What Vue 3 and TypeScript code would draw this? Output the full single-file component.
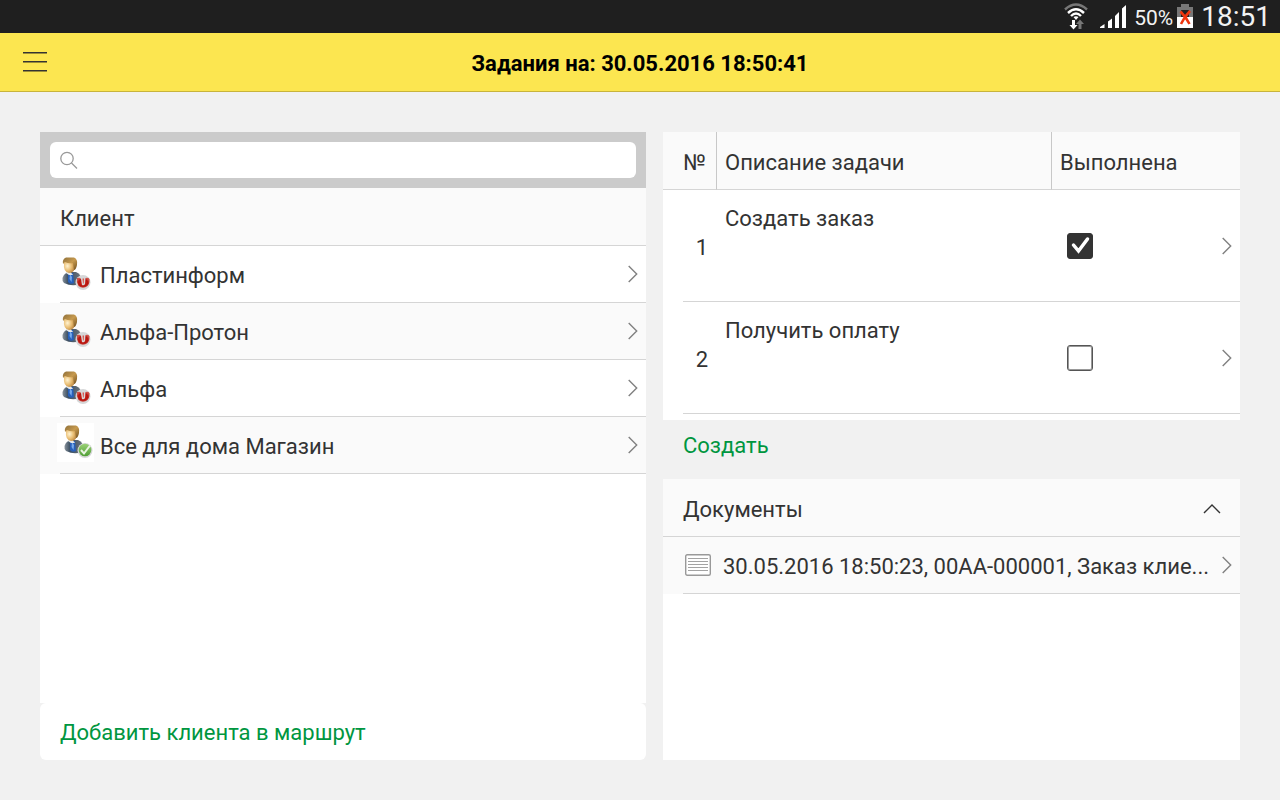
<script setup lang="ts">
import { ref } from 'vue'

interface Client {
  name: string
  done: boolean
}

interface Task {
  id: number
  title: string
  done: boolean
}

const title = 'Задания на: 30.05.2016 18:50:41'
const query = ref('')
const documentsOpen = ref(true)

const clients: Client[] = [
  { name: 'Пластинформ', done: false },
  { name: 'Альфа-Протон', done: false },
  { name: 'Альфа', done: false },
  { name: 'Все для дома Магазин', done: true },
]

const tasks = ref<Task[]>([
  { id: 1, title: 'Создать заказ', done: true },
  { id: 2, title: 'Получить оплату', done: false },
])

const documents: string[] = ['30.05.2016 18:50:23, 00АА-000001, Заказ клие...']
</script>

<template>
  <div class="screen">
    <div class="status">
      <svg class="wifi" width="26" height="28" viewBox="0 0 26 28" fill="none">
        <path d="M2 7.5Q13-2.5 24 7.5" stroke="#777" stroke-width="2.4" />
        <path d="M5 11Q13 3.5 21 11M8 14Q13 9 18 14" stroke="#fff" stroke-width="2.4" />
        <path d="M10.5 15Q13 13.5 15.5 15L13 18z" fill="#fff" />
        <path d="M9 18h3v5h2.500l-4 4.500L6.500 23H9z" fill="#fff" />
        <path d="M15.500 27v-5H13l4-4.500 4 4.500h-2.500v5z" fill="#777" />
      </svg>
      <svg class="signal" width="27" height="23" viewBox="0 0 27 23" fill="#fff">
        <path d="M0 23v-1l4.500-3v4zM8 23v-6.500l4-3v9.500zM15 23v-12l4-4v16zM22 23v-19.500l4-3.500v23z" />
      </svg>
      <span class="percent">50%</span>
      <svg class="battery" width="16" height="24" viewBox="0 0 16 24">
        <path d="M4 0h8v3h4v10H0V3h4z" fill="#777" />
        <path d="M4 6h8v7H4z" fill="#222" />
        <path d="M0 13h16v11H0z" fill="#fff" />
        <path d="M3.500 7.500Q9 13 12.500 20M13 7Q7 13 4 20" stroke="#f0350e" stroke-width="2.500" fill="none" />
      </svg>
      <time class="clock">18:51</time>
    </div>

    <header class="bar">
      <button class="menu" type="button" aria-label="Меню">
        <svg width="24" height="20" viewBox="0 0 24 20">
          <path d="M0 0h24v1H0zM0 9h24v1H0zM0 18h24v1H0z" fill="#333" />
          <path d="M0 1h24v1H0zM0 10h24v1H0zM0 19h24v1H0z" fill="#988b3b" />
        </svg>
      </button>
      <h1>{{ title }}</h1>
    </header>

    <main class="content">
      <section class="clients">
        <div class="search">
          <label class="field">
            <svg width="18" height="18" viewBox="0 0 18 18" fill="none" stroke="#999" stroke-width="1.300">
              <circle cx="7" cy="7.500" r="6.200" />
              <path d="M11.500 12l5.500 5.500" />
            </svg>
            <input v-model="query" type="search" aria-label="Поиск клиента" />
          </label>
        </div>
        <h2 class="heading">Клиент</h2>
        <ul class="list">
          <li v-for="client in clients" :key="client.name">
            <button class="row client" type="button">
              <svg class="person" :class="{ framed: client.done }" width="37" height="39" viewBox="0 0 37 39">
                <defs>
                  <radialGradient id="face" cx=".3" cy=".5" r=".75">
                    <stop offset="0" stop-color="#fff3d2" />
                    <stop offset=".45" stop-color="#e9bd72" />
                    <stop offset="1" stop-color="#a06624" />
                  </radialGradient>
                  <linearGradient id="hair" x1="0" y1="0" x2="1" y2="1">
                    <stop offset="0" stop-color="#8e703b" />
                    <stop offset=".5" stop-color="#c79a4e" />
                    <stop offset="1" stop-color="#72501f" />
                  </linearGradient>
                  <linearGradient id="suit" x1="0" y1="0" x2="1" y2="0">
                    <stop offset="0" stop-color="#8a939b" />
                    <stop offset=".3" stop-color="#3c4f63" />
                    <stop offset="1" stop-color="#6c757d" />
                  </linearGradient>
                  <radialGradient id="redBadge" cx=".5" cy=".5" r=".5">
                    <stop offset="0" stop-color="#d9291d" />
                    <stop offset=".7" stop-color="#b5140e" />
                    <stop offset="1" stop-color="#cf5148" />
                  </radialGradient>
                  <linearGradient id="greenBadge" x1="0" y1="0" x2="0" y2="1">
                    <stop offset="0" stop-color="#9bd276" />
                    <stop offset="1" stop-color="#4f9e35" />
                  </linearGradient>
                </defs>
                <g :transform="client.done ? 'translate(2 -3)' : undefined">
                  <path d="M5.500 26Q7 21 12 20L19 20Q24 22 24 27L23 32Q15 35 7 31Q5 29 5.500 26z" fill="url(#suit)" />
                  <path d="M11 21L16 21L17 31Q13 33 11 30z" fill="#2860ba" />
                  <path d="M13 22L15 25L14.500 30L12.500 27z" fill="#77a9eb" />
                  <path d="M9 21L12 18L16 23L12 23z" fill="#e8e9e8" />
                  <path d="M7 11Q6 20 12 21Q18 21 19 12Q18 7 13 7Q8 7 7 11z" fill="url(#face)" />
                  <path d="M6 12Q5 7 9 5.500L17 5.500Q21 7 20 13Q19 18 17 18L16 11Q12 12 8 10z" fill="url(#hair)" />
                  <circle cx="26" cy="30.500" r="7.500" fill="#d6d7d8" />
                  <template v-if="client.done">
                    <circle cx="26" cy="30" r="6.300" fill="url(#greenBadge)" />
                    <path d="M22 30l3 3.500 6-8" fill="none" stroke="#e9f5e2" stroke-width="2" />
                  </template>
                  <template v-else>
                    <path d="M20 26Q23 25 24 27L25 33Q27 34 28 32L28.500 26Q31 25 32.500 27Q33 33 29 35Q25 37 21.500 34Q19 30 20 26z" fill="url(#redBadge)" />
                    <path d="M25.500 26.500h1.500l-.300 5h-.700z" fill="#d8564e" />
                  </template>
                </g>
              </svg>
              <span class="label">{{ client.name }}</span>
              <svg class="chevron" width="10" height="18" viewBox="0 0 10 18">
                <path d="M.700 1l8 8-8 8" />
              </svg>
            </button>
          </li>
        </ul>
        <button class="action add" type="button">Добавить клиента в маршрут</button>
      </section>

      <div class="details">
        <section class="tasks">
          <table>
            <colgroup>
              <col class="col-number" />
              <col />
              <col class="col-done" />
              <col class="col-open" />
            </colgroup>
            <thead>
              <tr>
                <th class="number" scope="col">№</th>
                <th scope="col">Описание задачи</th>
                <th colspan="2" scope="col">Выполнена</th>
              </tr>
            </thead>
            <tbody>
              <tr v-for="task in tasks" :key="task.id">
                <td class="number">{{ task.id }}</td>
                <td class="description">{{ task.title }}</td>
                <td class="done">
                  <input v-model="task.done" type="checkbox" :aria-label="task.title" />
                </td>
                <td class="open">
                  <button type="button" :aria-label="'Открыть: ' + task.title">
                    <svg class="chevron" width="10" height="18" viewBox="0 0 10 18">
                      <path d="M.700 1l8 8-8 8" />
                    </svg>
                  </button>
                </td>
              </tr>
            </tbody>
          </table>
        </section>
        <button class="action create" type="button">Создать</button>
        <section class="documents">
          <h2 class="heading">
            <button class="toggle" type="button" :aria-expanded="documentsOpen" @click="documentsOpen = !documentsOpen">
              <span>Документы</span>
              <svg width="18" height="10" viewBox="0 0 18 10" fill="none" stroke="#333" stroke-width="1.400">
                <path d="M1 9l8-8 8 8" />
              </svg>
            </button>
          </h2>
          <ul v-if="documentsOpen" class="list">
            <li v-for="item in documents" :key="item">
              <button class="row document" type="button">
                <svg class="sheet" width="26" height="22" viewBox="0 0 26 22" fill="none">
                  <rect x=".700" y=".700" width="24.600" height="20.600" rx="1.500" stroke="#999" stroke-width="1.400" fill="#fff" />
                  <path d="M3 4.500h20M3 7.500h20M3 10.500h20M3 13.500h20M3 16.500h20" stroke="#a3a3a3" />
                </svg>
                <span class="label">{{ item }}</span>
                <svg class="chevron" width="10" height="18" viewBox="0 0 10 18">
                  <path d="M.700 1l8 8-8 8" />
                </svg>
              </button>
            </li>
          </ul>
        </section>
      </div>
    </main>
  </div>
</template>

<style>
body {
  margin: 0;
}
</style>

<style scoped>
* {
  box-sizing: border-box;
}

.screen {
  display: flex;
  flex-direction: column;
  min-height: 100vh;
  background: #f1f1f1;
  color: #333;
  font: 22px/28px Roboto, "Noto Sans", sans-serif;
}

button {
  border: 0;
  padding: 0;
  background: none;
  color: inherit;
  font: inherit;
  text-align: left;
  cursor: pointer;
}

svg {
  display: block;
  flex: none;
}

.status {
  display: flex;
  align-items: center;
  justify-content: flex-end;
  height: 33px;
  padding-right: 9px;
  background: #1f1f1f;
  color: #f2f2f2;
}

.wifi {
  margin-bottom: 2px;
}

.signal {
  margin: 0 7px 0 11px;
}

.percent {
  padding-top: 2px;
  margin-right: 4px;
  font-size: 21px;
}

.battery {
  margin-bottom: 2px;
}

.clock {
  margin-left: 8px;
  font-size: 28px;
}

.bar {
  display: grid;
  grid-template-columns: 1fr auto 1fr;
  align-items: center;
  height: 59px;
  padding: 0 23px;
  border-bottom: 1px solid #c8b43c;
  background: #fce650;
}

.menu {
  justify-self: start;
}

h1 {
  margin: 0;
  padding-top: 3px;
  color: #000;
  font-size: 22px;
  font-weight: 700;
}

.content {
  display: grid;
  flex: 1;
  grid-template-columns: minmax(0, 606fr) minmax(0, 577fr);
  gap: 17px;
  padding: 40px;
}

.clients,
.details {
  display: flex;
  flex-direction: column;
}

.search {
  padding: 10px;
  background: #cbcbcb;
}

.field {
  display: flex;
  align-items: center;
  gap: 8px;
  height: 36px;
  padding: 0 10px;
  border-radius: 6px;
  background: #fff;
}

.field input {
  flex: 1;
  min-width: 0;
  border: 0;
  outline: 0;
  background: none;
  font: inherit;
}

.heading {
  margin: 0;
  padding: 17px 19px 12px 20px;
  border-bottom: 1px solid #d5d5d5;
  background: #fafafa;
  font-size: 22px;
  font-weight: 400;
}

.list {
  flex: 1;
  margin: 0;
  padding: 0;
  background: #fff;
  list-style: none;
}

.row {
  display: flex;
  align-items: center;
  width: 100%;
  height: 57px;
  background: linear-gradient(#d5d5d5, #d5d5d5) 20px 100% / 100% 1px no-repeat;
}

.client {
  padding: 0 8px 0 17px;
}

.list li:nth-child(even) .row,
.row.document {
  background-color: #fafafa;
}

.label {
  flex: 1;
  overflow: hidden;
  padding-top: 2px;
  white-space: nowrap;
}

.person {
  margin: 0 6px 6px 0;
}

.framed {
  background: #fff;
}

.chevron {
  fill: none;
  stroke: #808080;
  stroke-width: 1.4;
}

.row .chevron,
.sheet {
  margin-bottom: 2px;
}

.action {
  color: #009640;
}

.add {
  height: 57px;
  padding: 2px 20px 0;
  border-radius: 6px;
  background: #fff;
}

.tasks {
  padding-bottom: 6px;
  background: #fff;
}

table {
  width: 100%;
  border-spacing: 0;
  table-layout: fixed;
}

.col-number {
  width: 54px;
}

.col-done {
  width: 150px;
}

.col-open {
  width: 38px;
}

th {
  padding: 17px 8px 12px;
  border-bottom: 1px solid #d5d5d5;
  background: #fafafa;
  font-weight: 400;
  text-align: left;
}

th:not(:last-child) {
  border-right: 1px solid #c8c8c8;
}

th.number {
  padding-right: 0;
  padding-left: 20px;
}

td {
  height: 112px;
  padding: 0;
  background: linear-gradient(#d5d5d5, #d5d5d5) 0 100% / 100% 1px no-repeat;
}

td.number {
  padding: 3px 9px 0 0;
  background-position: 20px 100%;
  text-align: right;
}

.description {
  padding: 15px 8px;
  vertical-align: top;
}

.done {
  padding-left: 15px;
}

.done input {
  display: block;
  width: 26px;
  height: 26px;
  margin: 0;
  border: 1px solid #555;
  border-radius: 3px;
  appearance: none;
  background: #fff;
  box-shadow: inset 0 0 0 1px #999;
}

.done input:checked {
  border-color: #333;
  background: #333 url("data:image/svg+xml,%3Csvg xmlns='http://www.w3.org/2000/svg' viewBox='0 0 24 24'%3E%3Cpath d='M5.500 11l5 6 9-12' fill='none' stroke='white' stroke-width='3.500' stroke-linecap='round'/%3E%3C/svg%3E") center / 24px;
  box-shadow: none;
}

.open button {
  display: block;
  margin: 0 8px 0 auto;
}

.create {
  height: 59px;
  padding: 0 20px 8px;
}

.documents {
  display: flex;
  flex: 1;
  flex-direction: column;
}

.toggle {
  display: flex;
  align-items: center;
  justify-content: space-between;
  width: 100%;
}

.toggle svg {
  margin-bottom: 3px;
}

.document {
  gap: 12px;
  padding: 0 8px 0 22px;
}
</style>
